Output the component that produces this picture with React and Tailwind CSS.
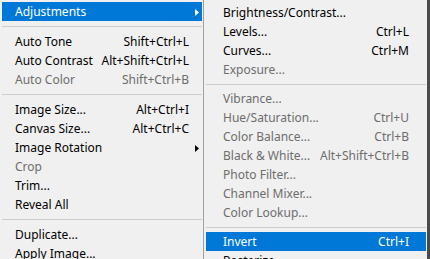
import React from "react";

const leftItems = [
  { label: "Adjustments", active: true, sub: true },
  { sep: true },
  { label: "Auto Tone", key: "Shift+Ctrl+L" },
  { label: "Auto Contrast", key: "Alt+Shift+Ctrl+L" },
  { label: "Auto Color", key: "Shift+Ctrl+B", disabled: true },
  { sep: true },
  { label: "Image Size...", key: "Alt+Ctrl+I" },
  { label: "Canvas Size...", key: "Alt+Ctrl+C" },
  { label: "Image Rotation", sub: true },
  { label: "Crop", disabled: true },
  { label: "Trim..." },
  { label: "Reveal All" },
  { sep: true },
  { label: "Duplicate..." },
  { label: "Apply Image..." },
];

const rightItems = [
  { label: "Brightness/Contrast..." },
  { label: "Levels...", key: "Ctrl+L" },
  { label: "Curves...", key: "Ctrl+M" },
  { label: "Exposure...", disabled: true },
  { sep: true },
  { label: "Vibrance...", disabled: true },
  { label: "Hue/Saturation...", key: "Ctrl+U", disabled: true },
  { label: "Color Balance...", key: "Ctrl+B", disabled: true },
  { label: "Black & White...", key: "Alt+Shift+Ctrl+B", disabled: true },
  { label: "Photo Filter...", disabled: true },
  { label: "Channel Mixer...", disabled: true },
  { label: "Color Lookup...", disabled: true },
  { sep: true },
  { label: "Invert", key: "Ctrl+I", active: true },
  { label: "Posterize..." },
];

const Arrow = ({ white }) => (
  <svg width="4" height="7" viewBox="0 0 4 7" className="ml-auto -mr-[10px] shrink-0">
    <path d="M0 0 L4 3.5 L0 7 Z" fill={white ? "#ffffff" : "#000000"} />
  </svg>
);

const Row = ({ item, side }) => {
  const color = item.active
    ? "bg-[#0078d7] text-white"
    : item.disabled
    ? "text-[#6d6d6d]"
    : "text-black";
  const pad = side === "left" ? "pl-[13px] pr-[13px]" : "pl-[17px] pr-[17px]";
  return (
    <div className={`flex items-center h-[19px] pt-px whitespace-nowrap ${pad} ${color}`}>
      <span>{item.label}</span>
      {item.key && <span className="ml-auto">{item.key}</span>}
      {item.sub && <Arrow white={item.active} />}
    </div>
  );
};

const Menu = ({ items, side, sepH }) =>
  items.map((item, i) =>
    item.sep ? (
      <div key={i} className={`${sepH} pt-[5px]`}>
        <div className="h-px bg-[#cccccc]" />
      </div>
    ) : (
      <Row key={i} item={item} side={side} />
    )
  );

export default function App() {
  return (
    <div
      className="flex w-[430px] h-[259px] overflow-hidden bg-[#f0f0f0] text-[12px] leading-none"
      style={{ fontFamily: '"Noto Sans", "Open Sans", sans-serif' }}
    >
      <div className="w-[203px] shrink-0 pl-[2px] pr-px pt-[2px]">
        <Menu items={leftItems} side="left" sepH="h-[11px]" />
      </div>
      <div className="flex-1 border-l border-[#a0a0a0] pl-[2px] pr-px pt-[3px] border-r-[3px] border-r-[#4a4a4a]">
        <Menu items={rightItems} side="right" sepH="h-[10px]" />
      </div>
    </div>
  );
}
